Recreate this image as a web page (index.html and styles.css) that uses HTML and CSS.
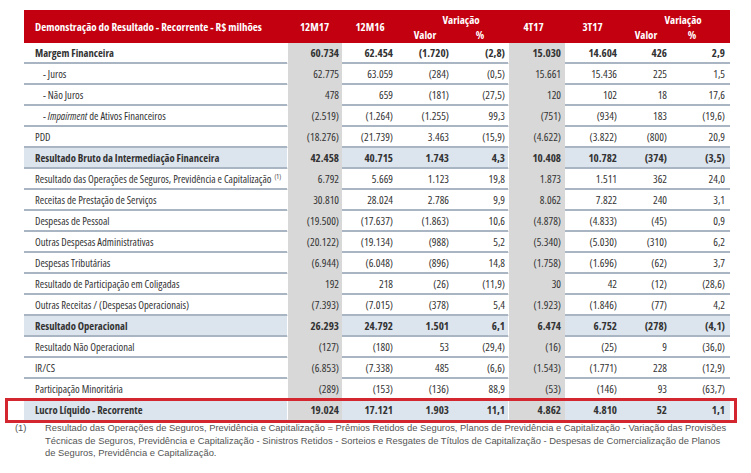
FILE: index.html
```html
<!DOCTYPE html>
<html lang="pt">
<head>
<meta charset="utf-8">
<title>Demonstração do Resultado</title>
<link rel="stylesheet" href="styles.css">
</head>
<body>
<div class="page">
  <div class="tbl">
    <div class="head">
      <div class="h-title">Demonstração do Resultado - Recorrente - R$ milhões</div>
      <div class="h-col hc1">12M17</div>
      <div class="h-col hc2">12M16</div>
      <div class="h-var hv1">Variação</div>
      <div class="h-sub hs3">Valor</div>
      <div class="h-sub hs4">%</div>
      <div class="h-col hc5">4T17</div>
      <div class="h-col hc6">3T17</div>
      <div class="h-var hv2">Variação</div>
      <div class="h-sub hs7">Valor</div>
      <div class="h-sub hs8">%</div>
    </div>

    <div class="row bold"><div class="lbl"><span>Margem Financeira</span></div><div class="g">60.734</div><div>62.454</div><div>(1.720)</div><div>(2,8)</div><div class="g">15.030</div><div>14.604</div><div>426</div><div>2,9</div></div>
    <div class="row"><div class="lbl sub"><span>- Juros</span></div><div class="g">62.775</div><div>63.059</div><div>(284)</div><div>(0,5)</div><div class="g">15.661</div><div>15.436</div><div>225</div><div>1,5</div></div>
    <div class="row"><div class="lbl sub"><span>- Não Juros</span></div><div class="g">478</div><div>659</div><div>(181)</div><div>(27,5)</div><div class="g">120</div><div>102</div><div>18</div><div>17,6</div></div>
    <div class="row"><div class="lbl sub"><span>- <i>Impairment</i> de Ativos Financeiros</span></div><div class="g">(2.519)</div><div>(1.264)</div><div>(1.255)</div><div>99,3</div><div class="g">(751)</div><div>(934)</div><div>183</div><div>(19,6)</div></div>
    <div class="row"><div class="lbl"><span>PDD</span></div><div class="g">(18.276)</div><div>(21.739)</div><div>3.463</div><div>(15,9)</div><div class="g">(4.622)</div><div>(3.822)</div><div>(800)</div><div>20,9</div></div>
    <div class="row bold blue"><div class="lbl"><span>Resultado Bruto da Intermediação Financeira</span></div><div class="g">42.458</div><div>40.715</div><div>1.743</div><div>4,3</div><div class="g">10.408</div><div>10.782</div><div>(374)</div><div>(3,5)</div></div>
    <div class="row"><div class="lbl"><span>Resultado das Operações de Seguros, Previdência e Capitalização <sup>(1)</sup></span></div><div class="g">6.792</div><div>5.669</div><div>1.123</div><div>19,8</div><div class="g">1.873</div><div>1.511</div><div>362</div><div>24,0</div></div>
    <div class="row"><div class="lbl"><span>Receitas de Prestação de Serviços</span></div><div class="g">30.810</div><div>28.024</div><div>2.786</div><div>9,9</div><div class="g">8.062</div><div>7.822</div><div>240</div><div>3,1</div></div>
    <div class="row"><div class="lbl"><span>Despesas de Pessoal</span></div><div class="g">(19.500)</div><div>(17.637)</div><div>(1.863)</div><div>10,6</div><div class="g">(4.878)</div><div>(4.833)</div><div>(45)</div><div>0,9</div></div>
    <div class="row"><div class="lbl"><span>Outras Despesas Administrativas</span></div><div class="g">(20.122)</div><div>(19.134)</div><div>(988)</div><div>5,2</div><div class="g">(5.340)</div><div>(5.030)</div><div>(310)</div><div>6,2</div></div>
    <div class="row"><div class="lbl"><span>Despesas Tributárias</span></div><div class="g">(6.944)</div><div>(6.048)</div><div>(896)</div><div>14,8</div><div class="g">(1.758)</div><div>(1.696)</div><div>(62)</div><div>3,7</div></div>
    <div class="row"><div class="lbl"><span>Resultado de Participação em Coligadas</span></div><div class="g">192</div><div>218</div><div>(26)</div><div>(11,9)</div><div class="g">30</div><div>42</div><div>(12)</div><div>(28,6)</div></div>
    <div class="row"><div class="lbl"><span>Outras Receitas / (Despesas Operacionais)</span></div><div class="g">(7.393)</div><div>(7.015)</div><div>(378)</div><div>5,4</div><div class="g">(1.923)</div><div>(1.846)</div><div>(77)</div><div>4,2</div></div>
    <div class="row bold blue"><div class="lbl"><span>Resultado Operacional</span></div><div class="g">26.293</div><div>24.792</div><div>1.501</div><div>6,1</div><div class="g">6.474</div><div>6.752</div><div>(278)</div><div>(4,1)</div></div>
    <div class="row"><div class="lbl"><span>Resultado Não Operacional</span></div><div class="g">(127)</div><div>(180)</div><div>53</div><div>(29,4)</div><div class="g">(16)</div><div>(25)</div><div>9</div><div>(36,0)</div></div>
    <div class="row"><div class="lbl"><span>IR/CS</span></div><div class="g">(6.853)</div><div>(7.338)</div><div>485</div><div>(6,6)</div><div class="g">(1.543)</div><div>(1.771)</div><div>228</div><div>(12,9)</div></div>
    <div class="row"><div class="lbl"><span>Participação Minoritária</span></div><div class="g">(289)</div><div>(153)</div><div>(136)</div><div>88,9</div><div class="g">(53)</div><div>(146)</div><div>93</div><div>(63,7)</div></div>
    <div class="row bold blue last"><div class="lbl"><span>Lucro Líquido - Recorrente</span></div><div class="g">19.024</div><div>17.121</div><div>1.903</div><div>11,1</div><div class="g">4.862</div><div>4.810</div><div>52</div><div>1,1</div></div>
  </div>

  <div class="note">
    <span class="note-n">(1)</span>
    <p class="note-t">Resultado das Operações de Seguros, Previdência e Capitalização = Prêmios Retidos de Seguros, Planos de Previdência e Capitalização - Variação das Provisões<br>Técnicas de Seguros, Previdência e Capitalização - Sinistros Retidos - Sorteios e Resgates de Títulos de Capitalização - Despesas de Comercialização de Planos<br>de Seguros, Previdência e Capitalização.</p>
  </div>
</div>
</body>
</html>
```

FILE: styles.css
```css
* { box-sizing: border-box; }

html, body {
  margin: 0;
  padding: 0;
  background: #ffffff;
}

.page {
  width: 751px;
  height: 473px;
  padding-top: 10px;
  overflow: hidden;
}

.tbl {
  margin-left: 24px;
  width: 706px;
  font-family: "Open Sans", "Liberation Sans", sans-serif;
  font-stretch: 75%;
  font-size: 11px;
  color: #333333;
}

/* ---------- header ---------- */
.head {
  display: grid;
  grid-template-columns: 263px 55px 56px 54px 56px 57px 55px 52px 58px;
  grid-template-rows: 15px 18px;
  background: #c2000f;
  color: #ffffff;
  font-weight: bold;
  font-size: 11px;
}

.head > div {
  display: flex;
  align-items: center;
  justify-content: center;
  white-space: nowrap;
}

.h-title {
  grid-column: 1;
  grid-row: 1 / 3;
  justify-content: flex-start !important;
  padding-left: 11px;
}

.hc1 { grid-column: 2; grid-row: 1 / 3; }
.hc2 { grid-column: 3; grid-row: 1 / 3; }
.hv1 { grid-column: 4 / 6; grid-row: 1; padding-left: 16px; padding-top: 4px; }
.hs3 { grid-column: 4; grid-row: 2; }
.hs4 { grid-column: 5; grid-row: 2; }
.hc5 { grid-column: 6; grid-row: 1 / 3; padding-right: 6px; }
.hc6 { grid-column: 7; grid-row: 1 / 3; }
.hv2 { grid-column: 8 / 10; grid-row: 1; padding-left: 16px; padding-top: 4px; }
.hs7 { grid-column: 8; grid-row: 2; }
.hs8 { grid-column: 9; grid-row: 2; padding-right: 18px; }

/* ---------- rows ---------- */
.row {
  display: grid;
  grid-template-columns: 263px 55px 56px 54px 56px 57px 55px 52px 58px;
  height: 21px;
  position: relative;
}

.row > div {
  display: flex;
  align-items: center;
  justify-content: flex-end;
  white-space: nowrap;
  border-bottom: 2px solid #aab5c4;
}

.row > .lbl {
  justify-content: flex-start;
  padding-left: 11px;
  font-size: 10.6px;
}

.row > .sub { padding-left: 19px; }

.row > div:nth-child(2) { padding-right: 3px; }
.row > div:nth-child(3) { padding-right: 5px; }
.row > div:nth-child(4) { padding-right: 3px; }
.row > div:nth-child(5) { padding-right: 3px; }
.row > div:nth-child(6) { padding-right: 4px; }
.row > div:nth-child(7) { padding-right: 3px; }
.row > div:nth-child(8) { padding-right: 5px; }
.row > div:nth-child(9) { padding-right: 5px; }

.row > .g {
  background: #d8d8d8;
  border-bottom-color: #d8d8d8;
  border-left: 1px solid #ffffff;
}

.bold { font-weight: bold; }

.blue > div { background: #dce4ee; }
.blue > .g { background: #d8d8d8; }

.lbl sup {
  font-size: 6.5px;
  margin-left: 1px;
  vertical-align: 4px;
  line-height: 0;
}

.last > div { border-bottom-color: transparent; }
.last > .g { border-bottom-color: #d8d8d8; }

.last::after {
  content: "";
  position: absolute;
  left: -19px;
  right: -7px;
  top: -2px;
  bottom: -2px;
  border: 3px solid #d3262f;
  pointer-events: none;
}

/* ---------- footnote ---------- */
.note {
  display: flex;
  padding-left: 15px;
  margin-top: 1px;
  font-family: "Liberation Sans", Arial, sans-serif;
  font-size: 9.4px;
  line-height: 12.5px;
  color: #555555;
}

.note-n {
  flex: 0 0 30px;
}

.note-t {
  margin: 0;
  width: 700px;
  white-space: nowrap;
}
```
